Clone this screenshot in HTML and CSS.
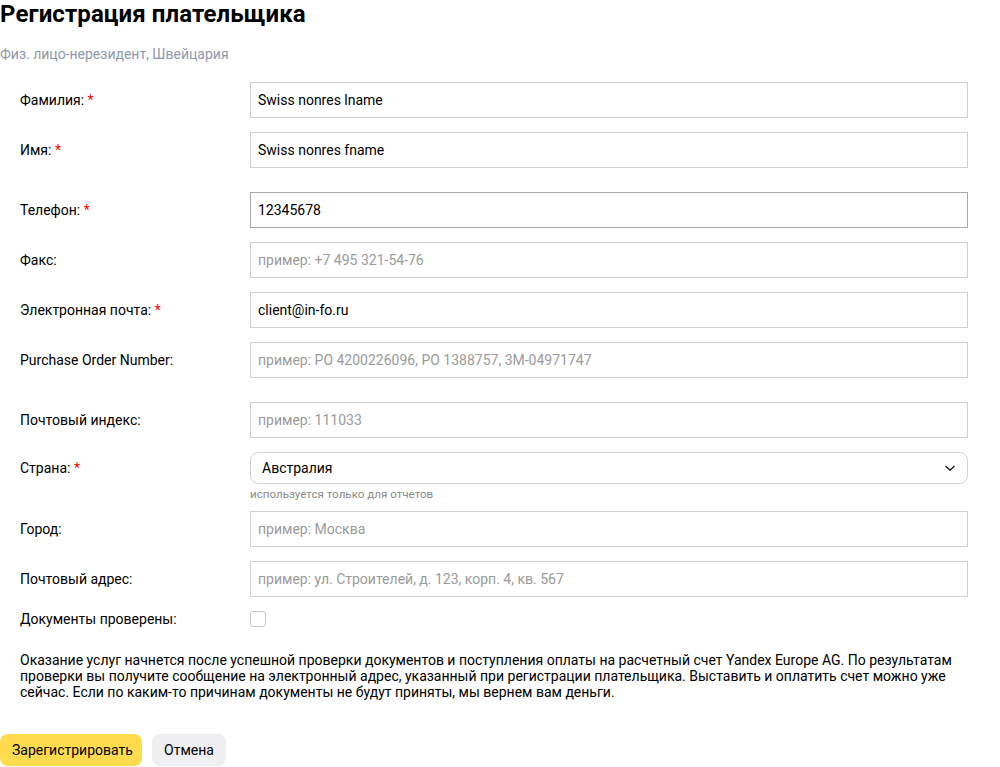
FILE: index.html
```html
<!DOCTYPE html>
<html lang="ru">
<head>
<meta charset="utf-8">
<title>Регистрация плательщика</title>
<link rel="stylesheet" href="styles.css">
</head>
<body>
<div class="page">
  <h1 class="title">Регистрация плательщика</h1>
  <div class="subtitle">Физ. лицо-нерезидент, Швейцария</div>

  <form class="form">
    <div class="group">
      <div class="row">
        <label class="label">Фамилия: <span class="req">*</span></label>
        <input class="input" type="text" value="Swiss nonres lname">
      </div>
      <div class="row">
        <label class="label">Имя: <span class="req">*</span></label>
        <input class="input" type="text" value="Swiss nonres fname">
      </div>
    </div>

    <div class="group">
      <div class="row">
        <label class="label">Телефон: <span class="req">*</span></label>
        <input class="input input-hover" type="text" value="12345678">
      </div>
      <div class="row">
        <label class="label">Факс:</label>
        <input class="input" type="text" placeholder="пример: +7 495 321-54-76">
      </div>
      <div class="row">
        <label class="label">Электронная почта: <span class="req">*</span></label>
        <input class="input" type="text" value="client@in-fo.ru">
      </div>
      <div class="row">
        <label class="label">Purchase Order Number:</label>
        <input class="input" type="text" placeholder="пример: PO 4200226096, PO 1388757, 3M-04971747">
      </div>
    </div>

    <div class="group">
      <div class="row">
        <label class="label">Почтовый индекс:</label>
        <input class="input" type="text" placeholder="пример: 111033">
      </div>
      <div class="row row-top">
        <label class="label label-select">Страна: <span class="req">*</span></label>
        <div class="field">
          <div class="select">
            <span class="select-text">Австралия</span>
            <svg class="chevron" width="12" height="8" viewBox="0 0 12 8"><path d="M1.5 2 L6 6.2 L10.5 2" fill="none" stroke="#000" stroke-width="1.1"/></svg>
          </div>
          <div class="hint">используется только для отчетов</div>
        </div>
      </div>
      <div class="row row-city">
        <label class="label">Город:</label>
        <input class="input" type="text" placeholder="пример: Москва">
      </div>
      <div class="row">
        <label class="label">Почтовый адрес:</label>
        <input class="input" type="text" placeholder="пример: ул. Строителей, д. 123, корп. 4, кв. 567">
      </div>
      <div class="row row-check">
        <label class="label">Документы проверены:</label>
        <span class="checkbox"></span>
      </div>
    </div>
  </form>

  <p class="note">Оказание услуг начнется после успешной проверки документов и поступления оплаты на расчетный счет Yandex Europe AG. По результатам<br>проверки вы получите сообщение на электронный адрес, указанный при регистрации плательщика. Выставить и оплатить счет можно уже<br>сейчас. Если по каким-то причинам документы не будут приняты, мы вернем вам деньги.</p>

  <div class="actions">
    <button class="btn btn-primary" type="button">Зарегистрировать</button>
    <button class="btn btn-secondary" type="button">Отмена</button>
  </div>
</div>
</body>
</html>
```

FILE: styles.css
```css
* { box-sizing: border-box; }
html, body { margin: 0; padding: 0; background: #fff; }
body {
  font-family: Roboto, "Liberation Sans", sans-serif;
  font-size: 14px;
  color: #000;
}
.page { width: 1000px; }
.title {
  margin: 0;
  padding-top: 1px;
  font-size: 24px;
  line-height: 26px;
  font-weight: 700;
  letter-spacing: 0.1px;
}
.subtitle {
  margin-top: 19px;
  font-size: 14px;
  line-height: 16px;
  color: #8f98aa;
}
.form {
  margin-top: 20px;
  display: flex;
  flex-direction: column;
  gap: 24px;
}
.group {
  display: flex;
  flex-direction: column;
  gap: 14px;
}
.row {
  display: grid;
  grid-template-columns: 230px 718px;
  padding-left: 20px;
  align-items: center;
}
.row-top { align-items: start; }
.row-city { margin-top: -4px; }
.label {
  font-size: 14px;
  line-height: 16px;
  color: #000;
}
.label-select { line-height: 32px; }
.req { color: #f00; }
.input {
  display: block;
  width: 718px;
  height: 36px;
  margin: 0;
  padding: 0 7px;
  border: 1px solid #d0d0d0;
  border-radius: 0;
  background: #fff;
  font-family: Roboto, "Liberation Sans", sans-serif;
  font-size: 14px;
  color: #000;
  outline: none;
}
.input::placeholder { color: #9b9b9b; }
.input-hover { border-color: #a8a8a8; }
.field { display: flex; flex-direction: column; }
.select {
  height: 32px;
  border: 1px solid #d3d3d3;
  border-radius: 8px;
  display: flex;
  align-items: center;
  justify-content: space-between;
  padding: 0 11px 0 11px;
}
.select-text { font-size: 14px; line-height: 16px; }
.chevron { display: block; }
.hint {
  margin-top: 4px;
  font-size: 11.6px;
  line-height: 13px;
  color: #8a8a8a;
}
.row-check .label { line-height: 16px; }
.checkbox {
  display: block;
  width: 16px;
  height: 16px;
  border: 1px solid #c8c8c8;
  border-radius: 3px;
  background: #fff;
}
.note {
  margin: 25px 0 0 20px;
  font-size: 14px;
  line-height: 16px;
  white-space: nowrap;
}
.actions {
  margin-top: 34px;
  display: flex;
  gap: 10px;
}
.btn {
  height: 32px;
  padding: 0 12px;
  border: none;
  border-radius: 8px;
  font-family: Roboto, "Liberation Sans", sans-serif;
  font-size: 14px;
  color: #000;
  cursor: pointer;
}
.btn-primary { background: #ffdb4d; width: 142px; }
.btn-secondary { background: #efeff2; width: 74px; }
```
